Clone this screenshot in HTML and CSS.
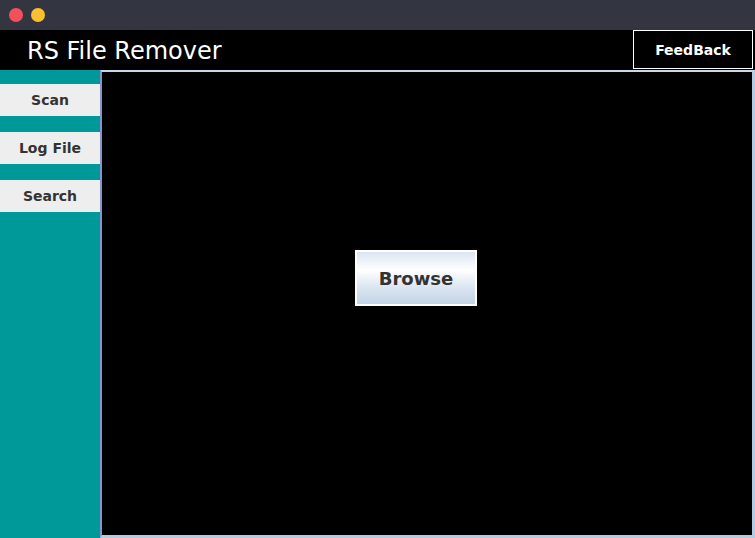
FILE: index.html
```html
<!DOCTYPE html>
<html>
<head>
<meta charset="utf-8">
<link rel="stylesheet" href="styles.css">
</head>
<body>
<div class="window">
  <div class="titlebar">
    <span class="dot red"></span>
    <span class="dot yellow"></span>
  </div>
  <div class="header">
    <div class="app-title">RS File Remover</div>
    <button class="feedback">FeedBack</button>
  </div>
  <div class="main">
    <div class="sidebar">
      <button class="side-btn">Scan</button>
      <button class="side-btn">Log File</button>
      <button class="side-btn">Search</button>
    </div>
    <div class="panel">
      <button class="browse">Browse</button>
    </div>
  </div>
</div>
</body>
</html>
```
FILE: styles.css
```css
html, body {
  margin: 0;
  padding: 0;
  background: #000;
}
.window {
  width: 755px;
  height: 538px;
  display: flex;
  flex-direction: column;
  font-family: "DejaVu Sans", sans-serif;
  overflow: hidden;
}
.titlebar {
  height: 30px;
  background: #333641;
  display: flex;
  align-items: center;
  padding-left: 9px;
  gap: 8px;
  box-sizing: border-box;
}
.dot {
  width: 14px;
  height: 14px;
  border-radius: 50%;
  display: block;
}
.red { background: #f4505a; }
.yellow { background: #fbc02f; }
.header {
  height: 40px;
  background: #000;
  display: flex;
  align-items: flex-start;
  justify-content: space-between;
}
.app-title {
  color: #fff;
  font-size: 24px;
  line-height: 24px;
  padding-left: 27px;
  padding-top: 9px;
}
.feedback {
  width: 120px;
  height: 39px;
  margin-right: 2px;
  background: #000;
  border: 1px solid #fff;
  color: #fff;
  font-family: "DejaVu Sans", sans-serif;
  font-weight: bold;
  font-size: 14px;
  padding: 0;
  padding-top: 1px;
}
.main {
  flex: 1;
  display: flex;
  background: #009999;
}
.sidebar {
  width: 100px;
  padding-top: 14px;
  display: flex;
  flex-direction: column;
  gap: 16px;
}
.side-btn {
  height: 32px;
  width: 100px;
  background: #eeeeee;
  border: none;
  color: #333;
  font-family: "DejaVu Sans", sans-serif;
  font-weight: bold;
  font-size: 14px;
  padding: 0;
}
.panel {
  flex: 1;
  background: #000;
  border-top: 2px solid #c6d8ee;
  border-left: 2px solid #8595cc;
  border-bottom: 3px solid #b6cae2;
  border-right: 3px solid #b6cae2;
  display: flex;
  align-items: center;
  justify-content: center;
  padding-right: 22px;
  padding-bottom: 51px;
}
.browse {
  width: 122px;
  height: 56px;
  border: 2px solid #fff;
  background: linear-gradient(to bottom, #dbe5f1 0%, #ffffff 35%, #d9e4f0 70%, #c2d4e7 100%);
  color: #333;
  font-family: "DejaVu Sans", sans-serif;
  font-weight: bold;
  font-size: 18px;
  padding: 0;
}
```
